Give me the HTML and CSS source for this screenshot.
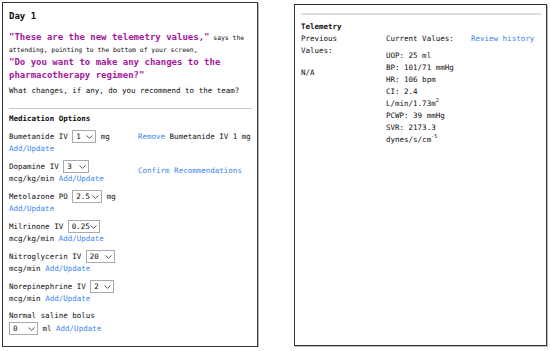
FILE: index.html
```html
<!DOCTYPE html>
<html lang="en">
<head>
  <meta charset="UTF-8">
  <title>Day 1 - Telemetry</title>
  <link rel="stylesheet" href="styles.css">
</head>
<body>

<div class="page">

  <div class="panel case">
    <h3 class="day">Day 1</h3>
    <p class="prompt">
      <span class="quote">"These are the new telemetry values,"</span> says the attending, pointing to the bottom of your screen,<br>
      <span class="quote">"Do you want to make any changes to the pharmacotherapy regimen?"</span>
    </p>
    <p class="question">What changes, if any, do you recommend to the team?</p>
    <hr>
    <h4>Medication Options</h4>

    <div class="meds">
      <div class="med-list">
        <div class="med">Bumetanide IV <span class="sel w1"><select><option>1</option></select><svg viewBox="0 0 7 4"><path d="M0.5 0.5L3.5 3.3L6.5 0.5"/></svg></span> mg <a href="#">Add/Update</a></div>
        <div class="med">Dopamine IV <span class="sel w2"><select><option>3</option></select><svg viewBox="0 0 7 4"><path d="M0.5 0.5L3.5 3.3L6.5 0.5"/></svg></span> mcg/kg/min <a href="#">Add/Update</a></div>
        <div class="med">Metolazone PO <span class="sel w4"><select><option>2.5</option></select><svg viewBox="0 0 7 4"><path d="M0.5 0.5L3.5 3.3L6.5 0.5"/></svg></span> mg <a href="#">Add/Update</a></div>
        <div class="med">Milrinone IV <span class="sel w5"><select><option>0.25</option></select><svg viewBox="0 0 7 4"><path d="M0.5 0.5L3.5 3.3L6.5 0.5"/></svg></span> mcg/kg/min <a href="#">Add/Update</a></div>
        <div class="med">Nitroglycerin IV <span class="sel w3"><select><option>20</option></select><svg viewBox="0 0 7 4"><path d="M0.5 0.5L3.5 3.3L6.5 0.5"/></svg></span> mcg/min <a href="#">Add/Update</a></div>
        <div class="med">Norepinephrine IV <span class="sel w1"><select><option>2</option></select><svg viewBox="0 0 7 4"><path d="M0.5 0.5L3.5 3.3L6.5 0.5"/></svg></span> mcg/min <a href="#">Add/Update</a></div>
        <div class="med">Normal saline bolus <span class="sel w3"><select><option>0</option></select><svg viewBox="0 0 7 4"><path d="M0.5 0.5L3.5 3.3L6.5 0.5"/></svg></span> ml <a href="#">Add/Update</a></div>
      </div>
      <div class="actions">
        <div class="current"><a href="#">Remove</a> Bumetanide IV 1 mg</div>
        <div class="confirm"><a href="#">Confirm Recommendations</a></div>
      </div>
    </div>
  </div>

  <div class="panel telemetry">
    <hr class="thick">
    <h4>Telemetry</h4>
    <div class="tele-grid">
      <div class="prev">
        <div>Previous Values:</div>
        <div class="na">N/A</div>
      </div>
      <div class="curr">
        <div>Current Values:</div>
        <div class="vals">
          <div>UOP: 25 ml</div>
          <div>BP: 101/71 mmHg</div>
          <div>HR: 106 bpm</div>
          <div>CI: 2.4 L/min/1.73m<sup>2</sup></div>
          <div>PCWP: 39 mmHg</div>
          <div>SVR: 2173.3 dynes/s/cm<sup>-5</sup></div>
        </div>
      </div>
      <div class="history"><a href="#">Review history</a></div>
    </div>
  </div>

</div>

</body>
</html>
```

FILE: styles.css
```css
body {
  margin: 0;
  font-family: "DejaVu Sans Mono", monospace;
  font-size: 7.5px;
  line-height: 12px;
  color: #0c0c0c;
  background: #fff;
}
.page {
  display: flex;
  align-items: flex-start;
  padding: 2px 0 0 2px;
}
.panel {
  border: 1px solid #333;
  box-shadow: 1px 1px 0 #bbb;
  background: #fff;
}
.case {
  width: 243px;
  height: 328px;
  padding: 7px 5px 8px 6px;
}
.telemetry {
  width: 240px;
  height: 328px;
  margin: 2px 0 0 36px;
  padding: 4px 5px 8px 6px;
}
a {
  color: #3a86f0;
  text-decoration: none;
}
p { margin: 0; }
h3, h4 { margin: 0; font-weight: bold; }
.day {
  font-size: 9px;
  line-height: 13px;
  margin-bottom: 8px;
}
.prompt {
  font-size: 6.4px;
  line-height: 12px;
}
.quote {
  color: #a3189c;
  font-weight: bold;
  font-size: 9px;
  line-height: 13px;
}
.question {
  margin-top: 3px;
}
hr {
  border: none;
  border-top: 1px solid #c8c8c8;
  margin: 11px 0 4px;
}
hr.thick {
  border-top: 2px solid #ddd;
  margin: 4px 0 6px;
}
h4 {
  font-size: 7.5px;
  margin-bottom: 5px;
}
.telemetry h4 { margin-bottom: 0; }
.meds {
  display: flex;
}
.med-list {
  width: 116px;
  flex: none;
}
.med {
  margin-bottom: 5px;
  line-height: 12px;
}
.sel {
  position: relative;
  display: inline-block;
  vertical-align: middle;
  height: 13px;
}
.sel select {
  appearance: none;
  -webkit-appearance: none;
  display: block;
  margin: 0;
  width: 100%;
  height: 13px;
  padding: 0 0 0 3px;
  font-family: "DejaVu Sans Mono", monospace;
  font-size: 7.5px;
  line-height: 11px;
  border: 1px solid #aaa;
  border-radius: 0;
  background: #fff;
  color: #0c0c0c;
}
.sel svg {
  position: absolute;
  right: 3px;
  top: 5px;
  width: 7px;
  height: 4px;
  fill: none;
  stroke: #555;
  stroke-width: 1;
}
.w1 { width: 24px; }
.w2 { width: 26px; }
.w3 { width: 29px; }
.w4 { width: 30px; }
.w5 { width: 32px; }
.actions {
  padding-left: 13px;
  padding-top: 1px;
}
.confirm {
  margin-top: 22px;
}
.tele-grid {
  display: grid;
  grid-template-columns: 85px 85px auto;
}
.prev div:first-child { width: 50px; }
.na { margin-top: 10px; }
.vals { margin-top: 5px; }
sup {
  font-size: 5px;
  line-height: 0;
  vertical-align: 4px;
}
```
